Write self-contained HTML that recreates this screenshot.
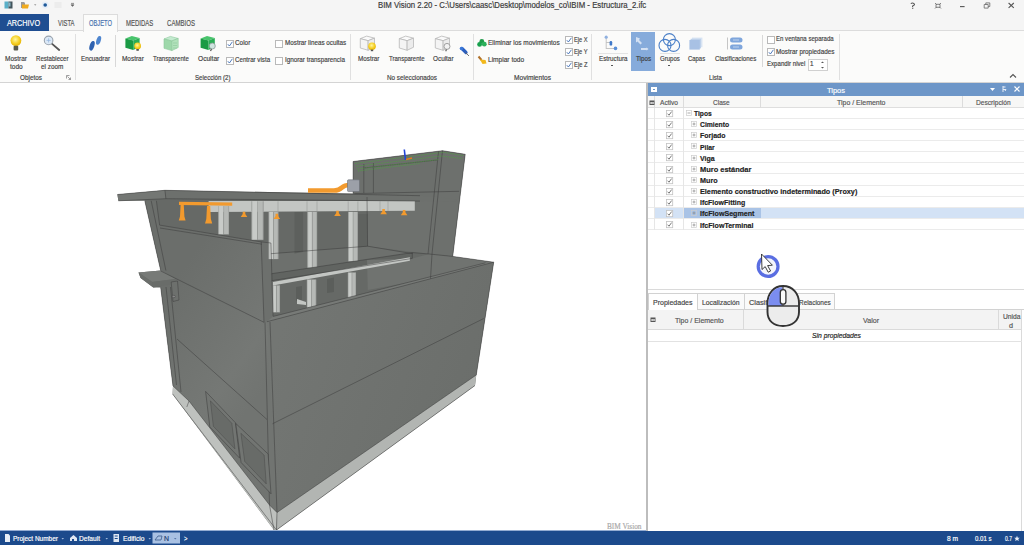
<!DOCTYPE html>
<html><head><meta charset="utf-8">
<style>
*{margin:0;padding:0;box-sizing:border-box}
html,body{width:1024px;height:545px;overflow:hidden;background:#fff;font-family:"Liberation Sans",sans-serif;color:#444;position:relative}
.a{position:absolute;white-space:nowrap;transform-origin:0 0;-webkit-text-stroke:0.18px currentColor}
svg{position:absolute;left:0;top:0}
</style></head><body>
<div class="a" style="left:0px;top:0px;width:1024px;height:31px;background:#f5f5f5;"></div>
<div class="a" style="left:0px;top:30px;width:1024px;height:53px;background:#fbfbfa;border-top:1px solid #dcdcdc;border-bottom:1px solid #d4d4d4"></div>
<div class="a" style="left:0px;top:83px;width:648px;height:448px;background:#ffffff;"></div>
<div class="a" style="left:0px;top:531px;width:1024px;height:14px;background:#1c4a8c;"></div>
<div class="a" style="left:378.00px;top:1.00px;font-size:8.4px;line-height:9.38px;color:#3a3a3a;transform:scaleX(0.930);">BIM Vision 2.20 - C:\Users\caasc\Desktop\modelos_co\IBIM - Estructura_2.ifc</div>
<svg width="80" height="14" style="left:0;top:0"><rect x="4.5" y="1.5" width="4" height="7" fill="#5ab0c8"/><rect x="8.5" y="1.5" width="4" height="7" fill="#44555c"/><rect x="8.5" y="2.5" width="2" height="4" fill="#8ab8c8"/><path d="M21 2h3l1 1v5h-4z" fill="#9a9a9a"/><path d="M22 4.5h7l-1 4h-6z" fill="#f0aa1e"/><path d="M34 4.6h2.4l-1.2 1z" fill="#666"/><circle cx="45.2" cy="5" r="3.4" fill="#e6eef8"/><circle cx="45.2" cy="5" r="1.8" fill="#1f5a9a"/><rect x="54.5" y="2" width="7" height="6" fill="#ececec"/><path d="M71 3.4h3M71.1 4.8l1.4 1.6 1.4-1.6z" stroke="#666" stroke-width="0.7" fill="#666"/></svg>
<svg width="120" height="14" style="left:900px;top:0"><path d="M10.8 3.6q1.7-1.2 3.2 0t-1.4 2.4v1" stroke="#555" stroke-width="1.1" fill="none"/><rect x="12.1" y="7.7" width="1.2" height="1.1" fill="#555"/><path d="M35 3l1.6 1.6M41 3l-1.6 1.6M35 8.5l1.6-1.6M41 8.5l-1.6-1.6M36 4.3h4v3h-4z" stroke="#666" stroke-width="0.8" fill="none"/><path d="M60 6.6h4.6" stroke="#555" stroke-width="1.1"/><path d="M84.2 4.5h4v3.6h-4zM85.8 4.5v-1.6h4v3.6h-1.6" stroke="#666" stroke-width="0.8" fill="none"/><path d="M108.6 3l5.2 4.8M113.8 3l-5.2 4.8" stroke="#555" stroke-width="1.1"/></svg>
<div class="a" style="left:0px;top:14px;width:49px;height:17px;background:#1f4e91;"></div>
<div class="a" style="left:7.30px;top:19.01px;font-size:8.5px;line-height:9.49px;color:#ffffff;transform:scaleX(0.855);">ARCHIVO</div>
<div class="a" style="left:58.00px;top:19.28px;font-size:8.2px;line-height:9.16px;color:#555;transform:scaleX(0.715);">VISTA</div>
<div class="a" style="left:83px;top:14px;width:35px;height:18px;background:#fbfbfa;border:1px solid #dcdcdc;border-bottom:none"></div>
<div class="a" style="left:89.00px;top:19.28px;font-size:8.2px;line-height:9.16px;color:#4a74b0;transform:scaleX(0.704);">OBJETO</div>
<div class="a" style="left:125.75px;top:19.28px;font-size:8.2px;line-height:9.16px;color:#555;transform:scaleX(0.729);">MEDIDAS</div>
<div class="a" style="left:167.00px;top:19.28px;font-size:8.2px;line-height:9.16px;color:#555;transform:scaleX(0.740);">CAMBIOS</div>
<div class="a" style="left:75px;top:34px;width:1px;height:46px;background:#e0e0e0;"></div>
<div class="a" style="left:350px;top:34px;width:1px;height:46px;background:#e0e0e0;"></div>
<div class="a" style="left:473px;top:34px;width:1px;height:46px;background:#e0e0e0;"></div>
<div class="a" style="left:591px;top:34px;width:1px;height:46px;background:#e0e0e0;"></div>
<div class="a" style="left:839px;top:34px;width:1px;height:46px;background:#e0e0e0;"></div>
<div class="a" style="left:115px;top:35px;width:1px;height:32px;background:#d8d8d8;"></div>
<div class="a" style="left:762px;top:35px;width:1px;height:32px;background:#d8d8d8;"></div>
<div class="a" style="left:5.30px;top:54.66px;font-size:8px;line-height:8.94px;color:#3e3e3e;transform:scaleX(0.811);">Mostrar</div>
<div class="a" style="left:9.90px;top:62.66px;font-size:8px;line-height:8.94px;color:#3e3e3e;transform:scaleX(0.816);">todo</div>
<div class="a" style="left:35.50px;top:54.66px;font-size:8px;line-height:8.94px;color:#3e3e3e;transform:scaleX(0.761);">Restablecer</div>
<div class="a" style="left:40.50px;top:62.66px;font-size:8px;line-height:8.94px;color:#3e3e3e;transform:scaleX(0.796);">el zoom</div>
<div class="a" style="left:81.00px;top:54.66px;font-size:8px;line-height:8.94px;color:#3e3e3e;transform:scaleX(0.786);">Encuadrar</div>
<div class="a" style="left:122.20px;top:54.66px;font-size:8px;line-height:8.94px;color:#3e3e3e;transform:scaleX(0.804);">Mostrar</div>
<div class="a" style="left:153.40px;top:54.66px;font-size:8px;line-height:8.94px;color:#3e3e3e;transform:scaleX(0.757);">Transparente</div>
<div class="a" style="left:197.50px;top:54.66px;font-size:8px;line-height:8.94px;color:#3e3e3e;transform:scaleX(0.824);">Ocultar</div>
<div class="a" style="left:357.80px;top:54.66px;font-size:8px;line-height:8.94px;color:#3e3e3e;transform:scaleX(0.789);">Mostrar</div>
<div class="a" style="left:388.50px;top:54.66px;font-size:8px;line-height:8.94px;color:#3e3e3e;transform:scaleX(0.751);">Transparente</div>
<div class="a" style="left:433.00px;top:54.66px;font-size:8px;line-height:8.94px;color:#3e3e3e;transform:scaleX(0.795);">Ocultar</div>
<div class="a" style="left:598.50px;top:54.66px;font-size:8px;line-height:8.94px;color:#3e3e3e;transform:scaleX(0.782);">Estructura</div>
<div class="a" style="left:631px;top:32px;width:24px;height:39px;background:#86abdb;"></div>
<div class="a" style="left:635.80px;top:54.66px;font-size:8px;line-height:8.94px;color:#3a3a3a;transform:scaleX(0.779);">Tipos</div>
<div class="a" style="left:659.70px;top:54.66px;font-size:8px;line-height:8.94px;color:#3e3e3e;transform:scaleX(0.755);">Grupos</div>
<div class="a" style="left:688.40px;top:54.66px;font-size:8px;line-height:8.94px;color:#3e3e3e;transform:scaleX(0.739);">Capas</div>
<div class="a" style="left:714.50px;top:54.66px;font-size:8px;line-height:8.94px;color:#3e3e3e;transform:scaleX(0.773);">Clasificaciones</div>
<div class="a" style="left:611px;top:65px;width:2px;height:1px;background:#555;"></div>
<div class="a" style="left:668px;top:65px;width:2px;height:1px;background:#555;"></div>
<div class="a" style="left:598px;top:53px;width:30px;height:1px;background:#e4e4e4;"></div>
<div class="a" style="left:659.5px;top:53px;width:20.5px;height:1px;background:#e4e4e4;"></div>
<svg width="9" height="9" style="left:225.5px;top:39.5px"><rect x="0.5" y="0.5" width="7" height="7" fill="#fff" stroke="#b9b9b9"/><path d="M1.8 4.2l1.6 1.8 3-4.2" stroke="#3c6cb4" stroke-width="0.9" fill="none"/></svg>
<div class="a" style="left:235.30px;top:39.26px;font-size:8px;line-height:8.94px;color:#3e3e3e;transform:scaleX(0.800);">Color</div>
<svg width="9" height="9" style="left:225.5px;top:56.5px"><rect x="0.5" y="0.5" width="7" height="7" fill="#fff" stroke="#b9b9b9"/><path d="M1.8 4.2l1.6 1.8 3-4.2" stroke="#3c6cb4" stroke-width="0.9" fill="none"/></svg>
<div class="a" style="left:235.30px;top:56.36px;font-size:8px;line-height:8.94px;color:#3e3e3e;transform:scaleX(0.774);">Centrar vista</div>
<svg width="9" height="9" style="left:275px;top:39.5px"><rect x="0.5" y="0.5" width="7" height="7" fill="#fff" stroke="#b9b9b9"/></svg>
<div class="a" style="left:284.80px;top:39.26px;font-size:8px;line-height:8.94px;color:#3e3e3e;transform:scaleX(0.787);">Mostrar lineas ocultas</div>
<svg width="9" height="9" style="left:275px;top:56.5px"><rect x="0.5" y="0.5" width="7" height="7" fill="#fff" stroke="#b9b9b9"/></svg>
<div class="a" style="left:284.80px;top:56.36px;font-size:8px;line-height:8.94px;color:#3e3e3e;transform:scaleX(0.788);">Ignorar transparencia</div>
<div class="a" style="left:487.80px;top:39.26px;font-size:8px;line-height:8.94px;color:#3e3e3e;transform:scaleX(0.810);">Eliminar los movimientos</div>
<div class="a" style="left:487.80px;top:56.36px;font-size:8px;line-height:8.94px;color:#3e3e3e;transform:scaleX(0.822);">Limpiar todo</div>
<svg width="9" height="9" style="left:564.5px;top:35.5px"><rect x="0.5" y="0.5" width="7" height="7" fill="#fff" stroke="#b9b9b9"/><path d="M1.8 4.2l1.6 1.8 3-4.2" stroke="#3c6cb4" stroke-width="0.9" fill="none"/></svg>
<div class="a" style="left:574.00px;top:35.86px;font-size:8px;line-height:8.94px;color:#3e3e3e;transform:scaleX(0.711);">Eje X</div>
<svg width="9" height="9" style="left:564.5px;top:48px"><rect x="0.5" y="0.5" width="7" height="7" fill="#fff" stroke="#b9b9b9"/><path d="M1.8 4.2l1.6 1.8 3-4.2" stroke="#3c6cb4" stroke-width="0.9" fill="none"/></svg>
<div class="a" style="left:574.00px;top:48.46px;font-size:8px;line-height:8.94px;color:#3e3e3e;transform:scaleX(0.717);">Eje Y</div>
<svg width="9" height="9" style="left:564.5px;top:60.7px"><rect x="0.5" y="0.5" width="7" height="7" fill="#fff" stroke="#b9b9b9"/><path d="M1.8 4.2l1.6 1.8 3-4.2" stroke="#3c6cb4" stroke-width="0.9" fill="none"/></svg>
<div class="a" style="left:574.00px;top:61.16px;font-size:8px;line-height:8.94px;color:#3e3e3e;transform:scaleX(0.728);">Eje Z</div>
<svg width="9" height="9" style="left:767px;top:35.5px"><rect x="0.5" y="0.5" width="7" height="7" fill="#fff" stroke="#b9b9b9"/></svg>
<div class="a" style="left:776.30px;top:35.36px;font-size:8px;line-height:8.94px;color:#3e3e3e;transform:scaleX(0.759);">En ventana separada</div>
<svg width="9" height="9" style="left:767px;top:47.5px"><rect x="0.5" y="0.5" width="7" height="7" fill="#fff" stroke="#b9b9b9"/><path d="M1.8 4.2l1.6 1.8 3-4.2" stroke="#3c6cb4" stroke-width="0.9" fill="none"/></svg>
<div class="a" style="left:776.30px;top:47.96px;font-size:8px;line-height:8.94px;color:#3e3e3e;transform:scaleX(0.797);">Mostrar propiedades</div>
<div class="a" style="left:766.50px;top:60.46px;font-size:8px;line-height:8.94px;color:#3e3e3e;transform:scaleX(0.762);">Expandir nivel</div>
<div class="a" style="left:807.5px;top:58.5px;width:20px;height:12px;background:#fff;border:1px solid #d0d0d0"></div>
<div class="a" style="left:810.00px;top:60.46px;font-size:8px;line-height:8.94px;color:#3e3e3e;transform:scaleX(0.787);">1</div>
<svg width="6" height="10" style="left:820px;top:59.5px"><path d="M1 3l1.5-1.5 1.5 1.5zM1 7l1.5 1.5 1.5-1.5z" fill="#555"/></svg>
<div class="a" style="left:20.00px;top:74.16px;font-size:8px;line-height:8.94px;color:#3e3e3e;transform:scaleX(0.798);">Objetos</div>
<div class="a" style="left:194.50px;top:74.16px;font-size:8px;line-height:8.94px;color:#3e3e3e;transform:scaleX(0.760);">Selección (2)</div>
<div class="a" style="left:386.50px;top:74.16px;font-size:8px;line-height:8.94px;color:#3e3e3e;transform:scaleX(0.792);">No seleccionados</div>
<div class="a" style="left:513.75px;top:74.16px;font-size:8px;line-height:8.94px;color:#3e3e3e;transform:scaleX(0.823);">Movimientos</div>
<div class="a" style="left:709.00px;top:74.16px;font-size:8px;line-height:8.94px;color:#3e3e3e;transform:scaleX(0.769);">Lista</div>
<svg width="6" height="6" style="left:65.5px;top:74.5px"><path d="M0.5 0.5h3M0.5 0.5v3M1.5 1.5l3 3M4.5 2.5v2h-2" stroke="#777" stroke-width="0.7" fill="none"/></svg>
<svg width="8" height="6" style="left:1009px;top:73px"><path d="M1 4.5l3-3 3 3" stroke="#555" stroke-width="1.1" fill="none"/></svg>
<svg width="1024" height="83" style="left:0;top:0"><defs><radialGradient id="bulb" cx="0.45" cy="0.4" r="0.6"><stop offset="0" stop-color="#fff6a0"/><stop offset="0.6" stop-color="#f7d22a"/><stop offset="1" stop-color="#e6b400"/></radialGradient><linearGradient id="gcube" x1="0" y1="0" x2="1" y2="1"><stop offset="0" stop-color="#34b85a"/><stop offset="1" stop-color="#12873a"/></linearGradient></defs><circle cx="15.9" cy="40.6" r="5.4" fill="url(#bulb)"/><rect x="13.6" y="45.8" width="4.6" height="4.6" rx="1" fill="#5a5a4a"/><path d="M51.8 43.6L59.2 50" stroke="#555" stroke-width="1.8" stroke-linecap="round"/><circle cx="48.6" cy="40.4" r="4.3" fill="#dce9f7" stroke="#9aa3ad" stroke-width="1.1"/><path d="M46.5 40.4h4.2M48.6 38.3v4.2" stroke="#8fb2dc" stroke-width="0.7"/><ellipse cx="92" cy="45.8" rx="2.3" ry="5" transform="rotate(18 92 45.8)" fill="#2f62b0"/><ellipse cx="98.6" cy="40.4" rx="2.2" ry="4.6" transform="rotate(18 98.6 40.4)" fill="#4f86cf"/><polygon points="125.4,38.455999999999996 131.79,35.9 139.6,37.9448 133.21,40.5008" fill="#48c46c"/><polygon points="125.4,38.455999999999996 133.21,40.5008 133.21,50.099999999999994 125.4,47.7996" fill="#1a9a44"/><polygon points="133.21,40.5008 139.6,37.9448 139.6,47.032799999999995 133.21,50.099999999999994" fill="#2aae55"/><circle cx="137.6" cy="46" r="3.4" fill="url(#bulb)"/><rect x="136.4" y="49" width="2.4" height="1.8" fill="#555"/><polygon points="164,38.955999999999996 170.39,36.4 178.2,38.4448 171.81,41.0008" fill="#c4ead0" stroke="#8cc89a" stroke-width="0.6" stroke-linejoin="round"/><polygon points="164,38.955999999999996 171.81,41.0008 171.81,50.599999999999994 164,48.2996" fill="#9ed8aa" stroke="#8cc89a" stroke-width="0.6" stroke-linejoin="round"/><polygon points="171.81,41.0008 178.2,38.4448 178.2,47.532799999999995 171.81,50.599999999999994" fill="#b2e2bb" stroke="#8cc89a" stroke-width="0.6" stroke-linejoin="round"/><path d="M173 43h4M173 45.5h4M173 48h4" stroke="#8cc89a" stroke-width="0.6"/><polygon points="200.6,38.455999999999996 206.98999999999998,35.9 214.79999999999998,37.9448 208.41,40.5008" fill="#48c46c"/><polygon points="200.6,38.455999999999996 208.41,40.5008 208.41,50.099999999999994 200.6,47.7996" fill="#1a9a44"/><polygon points="208.41,40.5008 214.79999999999998,37.9448 214.79999999999998,47.032799999999995 208.41,50.099999999999994" fill="#2aae55"/><circle cx="212.3" cy="46" r="3" fill="#cfe5e0" stroke="#8a9a98" stroke-width="0.8"/><path d="M211.5 49l-1 2" stroke="#555" stroke-width="1.2"/><polygon points="360.3,38.656 366.69,36.1 374.5,38.144800000000004 368.11,40.7008" fill="#fafafa" stroke="#b8b8b8" stroke-width="0.8" stroke-linejoin="round"/><polygon points="360.3,38.656 368.11,40.7008 368.11,50.3 360.3,47.9996" fill="#f4f4f4" stroke="#b8b8b8" stroke-width="0.8" stroke-linejoin="round"/><polygon points="368.11,40.7008 374.5,38.144800000000004 374.5,47.2328 368.11,50.3" fill="#ececec" stroke="#b8b8b8" stroke-width="0.8" stroke-linejoin="round"/><circle cx="372" cy="46.2" r="3.8" fill="url(#bulb)"/><rect x="370.8" y="49.6" width="2.4" height="1.6" fill="#555"/><polygon points="399.3,38.656 405.69,36.1 413.5,38.144800000000004 407.11,40.7008" fill="#fafafa" stroke="#b8b8b8" stroke-width="0.8" stroke-linejoin="round"/><polygon points="399.3,38.656 407.11,40.7008 407.11,50.3 399.3,47.9996" fill="#f4f4f4" stroke="#b8b8b8" stroke-width="0.8" stroke-linejoin="round"/><polygon points="407.11,40.7008 413.5,38.144800000000004 413.5,47.2328 407.11,50.3" fill="#ececec" stroke="#b8b8b8" stroke-width="0.8" stroke-linejoin="round"/><polygon points="435.3,38.656 441.69,36.1 449.5,38.144800000000004 443.11,40.7008" fill="#fafafa" stroke="#b8b8b8" stroke-width="0.8" stroke-linejoin="round"/><polygon points="435.3,38.656 443.11,40.7008 443.11,50.3 435.3,47.9996" fill="#f4f4f4" stroke="#b8b8b8" stroke-width="0.8" stroke-linejoin="round"/><polygon points="443.11,40.7008 449.5,38.144800000000004 449.5,47.2328 443.11,50.3" fill="#ececec" stroke="#b8b8b8" stroke-width="0.8" stroke-linejoin="round"/><circle cx="447" cy="46.4" r="3" fill="#f2f2f2" stroke="#999" stroke-width="0.9"/><path d="M446.5 49.5l-0.8 1.8" stroke="#555" stroke-width="1.1"/><path d="M462 48.5l4 4" stroke="#2a5fc0" stroke-width="3.2" stroke-linecap="round"/><path d="M465.5 52.5l3.5 3.5" stroke="#666" stroke-width="0.9"/><circle cx="461.5" cy="48.5" r="1.8" fill="#3a78d8"/><circle cx="481.8" cy="41.4" r="2.4" fill="#1f9a4a"/><circle cx="479.6" cy="44.4" r="2.4" fill="#17a04c"/><circle cx="484.3" cy="44.2" r="2.4" fill="#2bb05a"/><path d="M478.5 56.5l3 3.5" stroke="#b0702a" stroke-width="2"/><path d="M480 59.5l5.5 0.5 1 3.5-4 .5z" fill="#f2b81a"/><path d="M606.2 37v12M606.2 42.5h4.6M606.2 48.5h9" stroke="#b8b8b8" stroke-width="0.8" fill="none"/><circle cx="606.2" cy="37.2" r="1.6" fill="#8fb0e0"/><rect x="609.6" y="41" width="2.6" height="4.6" rx="1.2" fill="#3f78c8"/><circle cx="615.5" cy="48.4" r="1.8" fill="#5a8fd8"/><path d="M636 37l4 1.5-1 1.5 3 3-1.5 1.5-3-3-1.5 1z" fill="#d4e1f3"/><path d="M641 48h6l-1.5-1.5 3 2.5-3 2.5 1.5-1.5h-6z" fill="#d4e1f3"/><circle cx="669.4" cy="39.6" r="6" fill="none" stroke="#4c80c8" stroke-width="1.1"/><circle cx="665" cy="45.4" r="6" fill="none" stroke="#4c80c8" stroke-width="1.1"/><circle cx="673.6" cy="45.4" r="6" fill="none" stroke="#4c80c8" stroke-width="1.1"/><rect x="692" y="37.6" width="10.4" height="9.6" fill="#d8e4f3"/><rect x="690.6" y="38.8" width="10.4" height="9.6" fill="#bed1ea"/><rect x="689.4" y="40" width="10.4" height="9.6" fill="#a8c1e4"/><path d="M727.5 37.5v12" stroke="#b8b8b8" stroke-width="0.8"/><rect x="730" y="37.5" width="12.5" height="5" rx="2.5" fill="#7fa6dc"/><rect x="730" y="44.5" width="12.5" height="5" rx="2.5" fill="#7fa6dc"/><path d="M733 40h6M733 47h6" stroke="#cfdff3" stroke-width="0.8"/></svg>
<div class="a" style="left:646px;top:83px;width:2px;height:448px;background:#bdbdbd;"></div>
<div class="a" style="left:648px;top:83px;width:376px;height:448px;background:#ffffff;"></div>
<div class="a" style="left:648px;top:83px;width:376px;height:13px;background:#6d96c8;"></div>
<div class="a" style="left:651px;top:86.5px;width:6px;height:5.5px;background:#ffffff;"></div>
<div class="a" style="left:653px;top:88.5px;width:2px;height:1.5px;background:#6d96c8;"></div>
<div class="a" style="left:827.00px;top:87.36px;font-size:8px;line-height:8.94px;color:#ffffff;transform:scaleX(0.934);">Tipos</div>
<svg width="34" height="13" style="left:988px;top:83px"><path d="M2 5h5l-2.5 3z" fill="#fff"/><path d="M15 3v6M15 4h2.5M15 6.5h3l-1 1.5" stroke="#e8eef8" stroke-width="1" fill="none"/><path d="M26.5 3.5l5 5M31.5 3.5l-5 5" stroke="#fff" stroke-width="1.2"/></svg>
<div class="a" style="left:648px;top:96px;width:376px;height:11.5px;background:#f7f7f6;border-bottom:1px solid #dedede"></div>
<div class="a" style="left:654px;top:96px;width:1px;height:11.5px;background:#dcdcdc;"></div>
<div class="a" style="left:683px;top:96px;width:1px;height:11.5px;background:#dcdcdc;"></div>
<div class="a" style="left:760px;top:96px;width:1px;height:11.5px;background:#dcdcdc;"></div>
<div class="a" style="left:962px;top:96px;width:1px;height:11.5px;background:#dcdcdc;"></div>
<svg width="7" height="6" style="left:649px;top:99.5px"><rect x="0.5" y="0.5" width="5" height="4.5" fill="#555"/><rect x="1.5" y="2" width="1.2" height="2" fill="#fff"/><rect x="3.4" y="2" width="1.2" height="2" fill="#fff"/></svg>
<div class="a" style="left:660.00px;top:98.76px;font-size:8px;line-height:8.94px;color:#555;transform:scaleX(0.826);">Activo</div>
<div class="a" style="left:713.40px;top:98.76px;font-size:8px;line-height:8.94px;color:#555;transform:scaleX(0.812);">Clase</div>
<div class="a" style="left:837.30px;top:98.76px;font-size:8px;line-height:8.94px;color:#555;transform:scaleX(0.870);">Tipo / Elemento</div>
<div class="a" style="left:975.90px;top:98.76px;font-size:8px;line-height:8.94px;color:#555;transform:scaleX(0.828);">Descripción</div>
<div class="a" style="left:654px;top:207.94px;width:370px;height:11.16px;background:#d3e2f5;"></div>
<div class="a" style="left:684px;top:207.94px;width:76.5px;height:11.16px;background:#a9c3e6;"></div>
<div class="a" style="left:648px;top:117.66px;width:376px;height:1px;background:#ebebeb;"></div>
<svg width="8" height="8" style="left:665.5px;top:109.70px"><rect x="0.5" y="0.5" width="6.2" height="6.2" fill="#fff" stroke="#c2c2c2" stroke-width="0.8"/><path d="M1.6 3.7l1.4 1.5 2.6-3.6" stroke="#555" stroke-width="0.8" fill="none"/></svg>
<svg width="7" height="7" style="left:685.5px;top:110.00px"><rect x="0.5" y="0.5" width="5" height="5" fill="none" stroke="#ccc" stroke-width="0.7"/><path d="M1.5 3h3" stroke="#888" stroke-width="0.7"/></svg>
<div class="a" style="left:694.30px;top:110.04px;font-size:7.8px;line-height:8.71px;color:#222;font-weight:bold;transform:scaleX(0.857);">Tipos</div>
<div class="a" style="left:648px;top:128.82px;width:376px;height:1px;background:#ebebeb;"></div>
<svg width="8" height="8" style="left:665.5px;top:120.86px"><rect x="0.5" y="0.5" width="6.2" height="6.2" fill="#fff" stroke="#c2c2c2" stroke-width="0.8"/><path d="M1.6 3.7l1.4 1.5 2.6-3.6" stroke="#555" stroke-width="0.8" fill="none"/></svg>
<svg width="7" height="7" style="left:690.5px;top:121.16px"><rect x="0.5" y="0.5" width="5" height="5" fill="none" stroke="#ccc" stroke-width="0.7"/><path d="M1.5 3h3M3 1.5v3" stroke="#888" stroke-width="0.7"/></svg>
<div class="a" style="left:699.60px;top:121.20px;font-size:7.8px;line-height:8.71px;color:#222;font-weight:bold;transform:scaleX(0.872);">Cimiento</div>
<div class="a" style="left:648px;top:139.98px;width:376px;height:1px;background:#ebebeb;"></div>
<svg width="8" height="8" style="left:665.5px;top:132.02px"><rect x="0.5" y="0.5" width="6.2" height="6.2" fill="#fff" stroke="#c2c2c2" stroke-width="0.8"/><path d="M1.6 3.7l1.4 1.5 2.6-3.6" stroke="#555" stroke-width="0.8" fill="none"/></svg>
<svg width="7" height="7" style="left:690.5px;top:132.32px"><rect x="0.5" y="0.5" width="5" height="5" fill="none" stroke="#ccc" stroke-width="0.7"/><path d="M1.5 3h3M3 1.5v3" stroke="#888" stroke-width="0.7"/></svg>
<div class="a" style="left:699.60px;top:132.36px;font-size:7.8px;line-height:8.71px;color:#222;font-weight:bold;transform:scaleX(0.895);">Forjado</div>
<div class="a" style="left:648px;top:151.14000000000001px;width:376px;height:1px;background:#ebebeb;"></div>
<svg width="8" height="8" style="left:665.5px;top:143.18px"><rect x="0.5" y="0.5" width="6.2" height="6.2" fill="#fff" stroke="#c2c2c2" stroke-width="0.8"/><path d="M1.6 3.7l1.4 1.5 2.6-3.6" stroke="#555" stroke-width="0.8" fill="none"/></svg>
<svg width="7" height="7" style="left:690.5px;top:143.48px"><rect x="0.5" y="0.5" width="5" height="5" fill="none" stroke="#ccc" stroke-width="0.7"/><path d="M1.5 3h3M3 1.5v3" stroke="#888" stroke-width="0.7"/></svg>
<div class="a" style="left:699.60px;top:143.52px;font-size:7.8px;line-height:8.71px;color:#222;font-weight:bold;transform:scaleX(0.869);">Pilar</div>
<div class="a" style="left:648px;top:162.29999999999998px;width:376px;height:1px;background:#ebebeb;"></div>
<svg width="8" height="8" style="left:665.5px;top:154.34px"><rect x="0.5" y="0.5" width="6.2" height="6.2" fill="#fff" stroke="#c2c2c2" stroke-width="0.8"/><path d="M1.6 3.7l1.4 1.5 2.6-3.6" stroke="#555" stroke-width="0.8" fill="none"/></svg>
<svg width="7" height="7" style="left:690.5px;top:154.64px"><rect x="0.5" y="0.5" width="5" height="5" fill="none" stroke="#ccc" stroke-width="0.7"/><path d="M1.5 3h3M3 1.5v3" stroke="#888" stroke-width="0.7"/></svg>
<div class="a" style="left:699.60px;top:154.68px;font-size:7.8px;line-height:8.71px;color:#222;font-weight:bold;transform:scaleX(0.900);">Viga</div>
<div class="a" style="left:648px;top:173.46px;width:376px;height:1px;background:#ebebeb;"></div>
<svg width="8" height="8" style="left:665.5px;top:165.50px"><rect x="0.5" y="0.5" width="6.2" height="6.2" fill="#fff" stroke="#c2c2c2" stroke-width="0.8"/><path d="M1.6 3.7l1.4 1.5 2.6-3.6" stroke="#555" stroke-width="0.8" fill="none"/></svg>
<svg width="7" height="7" style="left:690.5px;top:165.80px"><rect x="0.5" y="0.5" width="5" height="5" fill="none" stroke="#ccc" stroke-width="0.7"/><path d="M1.5 3h3M3 1.5v3" stroke="#888" stroke-width="0.7"/></svg>
<div class="a" style="left:699.60px;top:165.84px;font-size:7.8px;line-height:8.71px;color:#222;font-weight:bold;transform:scaleX(0.956);">Muro estándar</div>
<div class="a" style="left:648px;top:184.62px;width:376px;height:1px;background:#ebebeb;"></div>
<svg width="8" height="8" style="left:665.5px;top:176.66px"><rect x="0.5" y="0.5" width="6.2" height="6.2" fill="#fff" stroke="#c2c2c2" stroke-width="0.8"/><path d="M1.6 3.7l1.4 1.5 2.6-3.6" stroke="#555" stroke-width="0.8" fill="none"/></svg>
<svg width="7" height="7" style="left:690.5px;top:176.96px"><rect x="0.5" y="0.5" width="5" height="5" fill="none" stroke="#ccc" stroke-width="0.7"/><path d="M1.5 3h3M3 1.5v3" stroke="#888" stroke-width="0.7"/></svg>
<div class="a" style="left:699.60px;top:177.00px;font-size:7.8px;line-height:8.71px;color:#222;font-weight:bold;transform:scaleX(0.923);">Muro</div>
<div class="a" style="left:648px;top:195.78px;width:376px;height:1px;background:#ebebeb;"></div>
<svg width="8" height="8" style="left:665.5px;top:187.82px"><rect x="0.5" y="0.5" width="6.2" height="6.2" fill="#fff" stroke="#c2c2c2" stroke-width="0.8"/><path d="M1.6 3.7l1.4 1.5 2.6-3.6" stroke="#555" stroke-width="0.8" fill="none"/></svg>
<svg width="7" height="7" style="left:690.5px;top:188.12px"><rect x="0.5" y="0.5" width="5" height="5" fill="none" stroke="#ccc" stroke-width="0.7"/><path d="M1.5 3h3M3 1.5v3" stroke="#888" stroke-width="0.7"/></svg>
<div class="a" style="left:699.60px;top:188.16px;font-size:7.8px;line-height:8.71px;color:#222;font-weight:bold;transform:scaleX(0.931);">Elemento constructivo indeterminado (Proxy)</div>
<div class="a" style="left:648px;top:206.94px;width:376px;height:1px;background:#ebebeb;"></div>
<svg width="8" height="8" style="left:665.5px;top:198.98px"><rect x="0.5" y="0.5" width="6.2" height="6.2" fill="#fff" stroke="#c2c2c2" stroke-width="0.8"/><path d="M1.6 3.7l1.4 1.5 2.6-3.6" stroke="#555" stroke-width="0.8" fill="none"/></svg>
<svg width="7" height="7" style="left:690.5px;top:199.28px"><rect x="0.5" y="0.5" width="5" height="5" fill="none" stroke="#ccc" stroke-width="0.7"/><path d="M1.5 3h3M3 1.5v3" stroke="#888" stroke-width="0.7"/></svg>
<div class="a" style="left:699.60px;top:199.32px;font-size:7.8px;line-height:8.71px;color:#222;font-weight:bold;transform:scaleX(0.892);">IfcFlowFitting</div>
<div class="a" style="left:648px;top:218.1px;width:376px;height:1px;background:#ebebeb;"></div>
<svg width="8" height="8" style="left:665.5px;top:210.14px"><rect x="0.5" y="0.5" width="6.2" height="6.2" fill="#fff" stroke="#c2c2c2" stroke-width="0.8"/><path d="M1.6 3.7l1.4 1.5 2.6-3.6" stroke="#555" stroke-width="0.8" fill="none"/></svg>
<svg width="7" height="7" style="left:690.5px;top:210.44px"><rect x="0.5" y="0.5" width="5" height="5" fill="none" stroke="#ccc" stroke-width="0.7"/><path d="M1.5 3h3M3 1.5v3" stroke="#888" stroke-width="0.7"/></svg>
<div class="a" style="left:699.60px;top:210.48px;font-size:7.8px;line-height:8.71px;color:#222;font-weight:bold;transform:scaleX(0.910);">IfcFlowSegment</div>
<div class="a" style="left:648px;top:229.26px;width:376px;height:1px;background:#ebebeb;"></div>
<svg width="8" height="8" style="left:665.5px;top:221.30px"><rect x="0.5" y="0.5" width="6.2" height="6.2" fill="#fff" stroke="#c2c2c2" stroke-width="0.8"/><path d="M1.6 3.7l1.4 1.5 2.6-3.6" stroke="#555" stroke-width="0.8" fill="none"/></svg>
<svg width="7" height="7" style="left:690.5px;top:221.60px"><rect x="0.5" y="0.5" width="5" height="5" fill="none" stroke="#ccc" stroke-width="0.7"/><path d="M1.5 3h3M3 1.5v3" stroke="#888" stroke-width="0.7"/></svg>
<div class="a" style="left:699.60px;top:221.64px;font-size:7.8px;line-height:8.71px;color:#222;font-weight:bold;transform:scaleX(0.908);">IfcFlowTerminal</div>
<div class="a" style="left:654px;top:107.5px;width:1px;height:122.76px;background:#e6e6e6;"></div>
<div class="a" style="left:683px;top:107.5px;width:1px;height:122.76px;background:#e6e6e6;"></div>
<div class="a" style="left:648px;top:289px;width:376px;height:1px;background:#dadada;"></div>
<div class="a" style="left:648px;top:293px;width:376px;height:17px;background:#ffffff;border-bottom:1px solid #d2d2d2"></div>
<div class="a" style="left:648px;top:293px;width:49.700000000000045px;height:17px;background:#ffffff;border:1px solid #d2d2d2;border-bottom:none"></div>
<div class="a" style="left:652.50px;top:298.76px;font-size:8px;line-height:8.94px;color:#444;transform:scaleX(0.879);">Propiedades</div>
<div class="a" style="left:696.7px;top:293px;width:48.59999999999991px;height:17px;background:#fafafa;border:1px solid #d2d2d2;"></div>
<div class="a" style="left:701.70px;top:298.76px;font-size:8px;line-height:8.94px;color:#444;transform:scaleX(0.854);">Localización</div>
<div class="a" style="left:744.3px;top:293px;width:52.700000000000045px;height:17px;background:#fafafa;border:1px solid #d2d2d2;"></div>
<div class="a" style="left:749.00px;top:298.76px;font-size:8px;line-height:8.94px;color:#444;transform:scaleX(0.913);">Clasificación</div>
<div class="a" style="left:796px;top:293px;width:39.39999999999998px;height:17px;background:#fafafa;border:1px solid #d2d2d2;"></div>
<div class="a" style="left:798.60px;top:298.76px;font-size:8px;line-height:8.94px;color:#444;transform:scaleX(0.801);">Relaciones</div>
<div class="a" style="left:648px;top:310px;width:374px;height:20px;background:#f3f3f3;border-bottom:1px solid #dadada"></div>
<div class="a" style="left:743px;top:310px;width:1px;height:20px;background:#dadada;"></div>
<div class="a" style="left:998px;top:310px;width:1px;height:20px;background:#dadada;"></div>
<div class="a" style="left:1021px;top:310px;width:1px;height:221px;background:#dadada;"></div>
<svg width="7" height="6" style="left:649.5px;top:316.5px"><rect x="0.5" y="0.5" width="5" height="4.5" fill="#555"/><rect x="1.5" y="2" width="1.2" height="2" fill="#fff"/><rect x="3.4" y="2" width="1.2" height="2" fill="#fff"/></svg>
<div class="a" style="left:675.00px;top:316.66px;font-size:8px;line-height:8.94px;color:#555;transform:scaleX(0.874);">Tipo / Elemento</div>
<div class="a" style="left:863.00px;top:316.66px;font-size:8px;line-height:8.94px;color:#555;transform:scaleX(0.885);">Valor</div>
<div class="a" style="left:1002.50px;top:313.26px;font-size:7px;line-height:7.82px;color:#555;transform:scaleX(0.957);">Unida</div>
<div class="a" style="left:1009.00px;top:321.87px;font-size:7px;line-height:7.82px;color:#555;transform:scaleX(1.027);">d</div>
<div class="a" style="left:648px;top:341px;width:374px;height:1px;background:#e2e2e2;"></div>
<div class="a" style="left:811.80px;top:332.36px;font-size:8px;line-height:8.94px;color:#222;font-style:italic;transform:scaleX(0.847);">Sin propiedades</div>
<svg width="1024" height="545" style="left:0;top:0"><defs><linearGradient id="lfg" gradientUnits="userSpaceOnUse" x1="160" y1="300" x2="270" y2="380"><stop offset="0" stop-color="#6b6e6b"/><stop offset="0.75" stop-color="#757875"/><stop offset="1" stop-color="#717471"/></linearGradient><linearGradient id="rfg" gradientUnits="userSpaceOnUse" x1="280" y1="330" x2="480" y2="400"><stop offset="0" stop-color="#737673"/><stop offset="1" stop-color="#6b6e6b"/></linearGradient></defs><polygon points="117.40,194.50 164.90,190.30 353.10,193.60 353.10,161.50 442.50,150.70 465.20,154.30 452.70,256.40 493.70,262.20 476.25,375.00 475.00,385.50 276.50,530.00 274.00,530.00 172.60,394.00 173.00,386.00 160.70,287.40 153.30,287.40 140.60,277.90 138.50,272.60 160.70,270.50 144.80,200.80 118.40,200.80" fill="#666966" /><polygon points="353.10,161.50 442.50,150.70 438.00,197.00 353.10,197.00" fill="#6c6f6c" /><polygon points="367.00,197.00 438.00,197.00 429.20,254.00 367.60,246.20" fill="#6e716e" /><polygon points="442.50,150.70 465.20,154.30 452.70,256.40 429.20,254.00" fill="#6d706d" /><polygon points="117.40,194.50 164.90,190.30 165.90,198.70 118.40,200.80" fill="#747774" /><polygon points="164.90,190.30 420.00,195.70 438.00,197.00 456.50,199.50 456.00,202.00 420.00,201.10 165.90,198.70" fill="#6d706d" /><polygon points="144.80,200.80 156.40,200.80 159.60,225.10 261.20,241.90 273.00,242.40 273.00,322.00 277.00,512.50 269.50,505.00 189.00,401.00 173.00,386.00 160.70,287.40 160.70,270.50" fill="url(#lfg)" /><polygon points="261.20,241.90 270.90,243.00 273.00,322.00 264.00,322.30" fill="#6d706d" /><polygon points="270.90,253.70 367.60,246.20 412.70,253.70 412.70,254.80 270.90,274.20" fill="#6d706d" /><polygon points="208.60,201.10 414.80,201.10 414.80,210.80 208.60,211.90" fill="#c3c6c3" /><path d="M251.6,201.3V211" stroke="#979a97" stroke-width="0.6"/><path d="M263.4,201.3V211" stroke="#979a97" stroke-width="0.6"/><path d="M278,201.3V211" stroke="#979a97" stroke-width="0.6"/><path d="M307,201.3V211" stroke="#979a97" stroke-width="0.6"/><path d="M317,201.3V211" stroke="#979a97" stroke-width="0.6"/><path d="M348.2,201.3V211" stroke="#979a97" stroke-width="0.6"/><path d="M357.9,201.3V211" stroke="#979a97" stroke-width="0.6"/><path d="M380,201.3V211" stroke="#979a97" stroke-width="0.6"/><path d="M388,201.3V211" stroke="#979a97" stroke-width="0.6"/><polygon points="294.50,211.90 303.10,211.90 303.10,252.00 294.50,253.50" fill="#5d605d" /><polygon points="357.90,214.00 367.60,214.00 367.60,246.20 357.90,247.60" fill="#5f625f" /><rect x="218.30" y="206.00" width="5.35" height="28.40" fill="#c8cbc8"/><rect x="223.65" y="206.00" width="5.35" height="28.40" fill="#b6b9b6"/><path d="M218.60,206V234.4M223.65,206V234.4M228.70,206V234.4" stroke="#7d807d" stroke-width="0.5" stroke-opacity="0.7"/><rect x="251.60" y="201.30" width="5.90" height="38.50" fill="#c8cbc8"/><rect x="257.50" y="201.30" width="5.90" height="38.50" fill="#b6b9b6"/><path d="M251.90,201.3V239.8M257.50,201.3V239.8M263.10,201.3V239.8" stroke="#7d807d" stroke-width="0.5" stroke-opacity="0.7"/><rect x="268.70" y="211.90" width="4.85" height="47.20" fill="#c8cbc8"/><rect x="273.55" y="211.90" width="4.85" height="47.20" fill="#b6b9b6"/><path d="M269.00,211.9V259.1M273.55,211.9V259.1M278.10,211.9V259.1" stroke="#7d807d" stroke-width="0.5" stroke-opacity="0.7"/><rect x="307.40" y="211.90" width="4.85" height="55.80" fill="#c8cbc8"/><rect x="312.25" y="211.90" width="4.85" height="55.80" fill="#b6b9b6"/><path d="M307.70,211.9V267.7M312.25,211.9V267.7M316.80,211.9V267.7" stroke="#7d807d" stroke-width="0.5" stroke-opacity="0.7"/><rect x="348.20" y="211.90" width="4.85" height="49.40" fill="#c8cbc8"/><rect x="353.05" y="211.90" width="4.85" height="49.40" fill="#b6b9b6"/><path d="M348.50,211.9V261.3M353.05,211.9V261.3M357.60,211.9V261.3" stroke="#7d807d" stroke-width="0.5" stroke-opacity="0.7"/><polygon points="271.70,273.70 412.30,252.60 412.30,258.40 271.70,280.70" fill="#616461" /><polygon points="367.00,260.00 412.30,258.40 429.20,254.00 452.70,256.40 493.70,262.20 428.60,278.60 367.80,290.00" fill="#707370" /><polygon points="272.90,281.90 409.90,257.30 409.90,260.80 272.90,285.40" fill="#c3c6c3" /><polygon points="296.00,287.00 302.00,286.00 302.00,300.00 296.00,301.00" fill="#5b5e5b" /><polygon points="327.00,279.00 334.00,277.50 334.00,292.00 327.00,293.00" fill="#5b5e5b" /><rect x="272.90" y="285.40" width="3.55" height="26.90" fill="#c8cbc8"/><rect x="276.45" y="285.40" width="3.55" height="26.90" fill="#b6b9b6"/><path d="M273.20,285.4V312.3M276.45,285.4V312.3M279.70,285.4V312.3" stroke="#7d807d" stroke-width="0.5" stroke-opacity="0.7"/><rect x="306.90" y="279.50" width="4.65" height="28.10" fill="#c8cbc8"/><rect x="311.55" y="279.50" width="4.65" height="28.10" fill="#b6b9b6"/><path d="M307.20,279.5V307.6M311.55,279.5V307.6M315.90,279.5V307.6" stroke="#7d807d" stroke-width="0.5" stroke-opacity="0.7"/><rect x="347.90" y="272.50" width="4.05" height="25.80" fill="#c8cbc8"/><rect x="351.95" y="272.50" width="4.05" height="25.80" fill="#b6b9b6"/><path d="M348.20,272.5V298.3M351.95,272.5V298.3M355.70,272.5V298.3" stroke="#7d807d" stroke-width="0.5" stroke-opacity="0.7"/><polygon points="297.00,299.00 306.00,302.00 306.00,305.00 297.00,304.00" fill="#c3c6c3" /><polygon points="267.00,321.70 493.70,262.20 476.25,375.00 277.00,512.50" fill="url(#rfg)" /><polygon points="267.00,321.70 272.90,316.50 485.50,262.80 493.70,262.20" fill="#777a77" /><polygon points="173.00,386.00 189.00,401.00 269.50,505.00 277.00,512.50 276.50,530.00 274.00,530.00 172.60,394.00" fill="#bec1be" /><polygon points="277.00,512.50 476.25,375.00 475.00,385.50 276.50,530.00" fill="#b2b5b2" /><polygon points="138.50,272.60 160.70,270.50 175.40,278.90 152.20,282.10" fill="#777a77" /><polygon points="138.50,272.60 152.20,282.10 153.30,287.40 140.60,277.90" fill="#6b6e6b" /><polygon points="152.20,282.10 175.40,278.90 175.60,283.50 153.30,287.40" fill="#696c69" /><polygon points="171.20,282.00 177.50,281.00 179.00,300.00 173.00,301.50" fill="#6d706d" stroke="#3a3a3a" stroke-width="0.6" stroke-opacity="0.8"/><ellipse cx="173.8" cy="296.5" rx="1.6" ry="1.2" fill="#888" stroke="#444" stroke-width="0.5"/><path d="M117.40,194.50 L164.90,190.30 L420.00,195.70M118.40,200.80 L165.90,198.70 L420.00,201.10M164.90,190.30 L165.90,198.70M144.80,200.80 L160.70,270.50M151.20,200.80 L165.90,270.50M156.40,200.80 L159.60,225.10M159.60,225.10 L261.20,241.90 L270.90,243.00M160.00,228.00 L262.00,244.20M261.20,241.90 L264.00,322.30M270.90,243.00 L273.00,316.00M160.70,271.00 L264.00,322.30M177.00,339.00 L267.00,419.50M160.70,287.40 L173.00,386.00M166.00,287.00 L176.50,385.00M170.50,287.00 L181.00,392.00M265.00,322.30 L269.50,505.00M270.00,322.00 L277.00,512.50M267.00,321.70 L493.70,262.20 L476.25,375.00M272.90,316.50 L485.50,262.80M272.50,423.75 L483.75,318.50M173.00,386.00 L189.00,401.00 L269.50,505.00 L277.00,512.50 L476.25,375.00M172.60,394.00 L276.50,530.00 L475.00,385.50M269.50,505.00 L274.00,530.00M277.00,512.50 L276.50,530.00M189.00,401.00 L186.80,407.00M353.10,161.50 L442.50,150.70 L465.20,154.30 L452.70,256.40M353.10,161.50 L353.10,193.60M442.50,150.70 L432.00,254.00 L430.50,278.60M438.50,151.50 L428.00,254.00M354.30,193.60 L459.20,191.30M363.80,164.00 L363.80,193.00M373.40,163.00 L373.40,193.00M363.80,168.00 L437.00,160.00M367.00,197.00 L367.60,246.20M270.90,253.70 L367.60,246.20 L412.70,253.70M271.70,273.70 L412.30,252.60 L412.30,258.40M271.70,280.70 L412.30,258.40M412.30,252.60 L429.20,254.00 L452.70,256.40 L493.70,262.20" stroke="#3a3a3a" stroke-width="0.75" fill="none" stroke-opacity="0.65"/><polygon points="205.60,391.40 235.40,422.70 239.70,458.20 209.80,426.90" fill="#727572" stroke="#3a3a3a" stroke-width="0.7" stroke-opacity="0.7"/><polygon points="210.37,400.75 231.82,423.29 234.92,448.85 213.39,426.31" fill="#686b68" stroke="#3a3a3a" stroke-width="0.6" stroke-opacity="0.6"/><polygon points="235.80,423.50 268.10,454.00 271.00,493.80 241.10,462.50" fill="#727572" stroke="#3a3a3a" stroke-width="0.7" stroke-opacity="0.7"/><polygon points="240.90,433.29 264.15,455.25 266.24,483.90 244.71,461.37" fill="#686b68" stroke="#3a3a3a" stroke-width="0.6" stroke-opacity="0.6"/><path d="M179 203.4L232.2 204.2" stroke="#f29a2e" stroke-width="3.2" fill="none"/><path d="M180.6 205L180 216.5 178.8 220.5h6.8L184.4 216.5 183.8 205zM207 206L206.3 219 205 223.5h7.2L210.9 219 210.2 206z" fill="#f29a2e"/><path d="M242.70,211.70h2.6v2.2l2 3h-6.6l2-3z" fill="#f29a2e"/><path d="M275.50,213.70h2.6v2.2l2 3h-6.6l2-3z" fill="#f29a2e"/><path d="M336.20,210.70h2.6v2.2l2 3h-6.6l2-3z" fill="#f29a2e"/><path d="M382.30,209.00h2.6v2.2l2 3h-6.6l2-3z" fill="#f29a2e"/><path d="M402.80,210.00h2.6v2.2l2 3h-6.6l2-3z" fill="#f29a2e"/><path d="M308 190.5H334Q339 190.5 342 187.5T351 185" stroke="#f29a2e" stroke-width="4.6" fill="none"/><rect x="347.5" y="179.8" width="12" height="11.8" rx="1" fill="#9ca0a8" stroke="#6a6e76" stroke-width="0.6"/><path d="M355,163.5 L443.5,152.3 L463.5,155.6 M356,166.3 L441,156 L462,158.5 M357,169 L439,159.5 M358,171 L420,163.5" stroke="#4aa83a" stroke-width="0.9" stroke-dasharray="0.9 0.9" fill="none" stroke-opacity="0.85"/><path d="M404.3,149.5 L405.5,160" stroke="#2244d8" stroke-width="1.6"/><path d="M406,159.5 L412,158" stroke="#e07a20" stroke-width="1.5"/></svg>
<svg width="200" height="14" style="left:0;top:531px"><path d="M5 3h3.5l1.5 1.5v6.5h-5z" fill="#e8eef6"/><path d="M61.5 7h2.5l-1.25 1.5z" fill="#9fb6d8"/><path d="M70 10v-3l3.5-3 3.5 3v3z" fill="#dfe7f2"/><rect x="72" y="8" width="2" height="2" fill="#1c4b8f"/><path d="M105.5 7h2.5l-1.25 1.5z" fill="#9fb6d8"/><rect x="113.5" y="3" width="5.5" height="8" fill="#dfe7f2"/><rect x="114.7" y="4.5" width="3" height="1" fill="#1c4b8f"/><rect x="114.7" y="7" width="3" height="1" fill="#1c4b8f"/><path d="M148.5 7h2.5l-1.25 1.5z" fill="#9fb6d8"/><rect x="152.5" y="1.5" width="27.5" height="11" fill="#a9c1e3"/><path d="M155 9l3-4h4l-1 4z" fill="none" stroke="#3a5a8a" stroke-width="0.8"/><path d="M174 7h2.5l-1.25 1.5z" fill="#5a78a8"/></svg>
<div class="a" style="left:12.50px;top:535.28px;font-size:7.2px;line-height:8.04px;color:#ffffff;transform:scaleX(0.900);">Project Number</div>
<div class="a" style="left:79.00px;top:535.28px;font-size:7.2px;line-height:8.04px;color:#ffffff;transform:scaleX(0.921);">Default</div>
<div class="a" style="left:122.50px;top:535.28px;font-size:7.2px;line-height:8.04px;color:#ffffff;transform:scaleX(0.926);">Edificio</div>
<div class="a" style="left:164.00px;top:535.28px;font-size:7.2px;line-height:8.04px;color:#1c3c70;transform:scaleX(0.962);">N</div>
<div class="a" style="left:183.50px;top:535.28px;font-size:7.2px;line-height:8.04px;color:#ffffff;transform:scaleX(0.832);">&gt;</div>
<div class="a" style="left:947.00px;top:535.46px;font-size:7px;line-height:7.82px;color:#ffffff;transform:scaleX(0.943);">8 m</div>
<div class="a" style="left:974.50px;top:535.46px;font-size:7px;line-height:7.82px;color:#ffffff;transform:scaleX(0.865);">0.01 s</div>
<div class="a" style="left:1004.50px;top:535.46px;font-size:7px;line-height:7.82px;color:#ffffff;transform:scaleX(0.719);">0.7</div>
<svg width="8" height="8" style="left:1013.5px;top:535px"><path d="M3 0.8l.8 1.9 2 .1-1.5 1.3.5 2-1.8-1.1-1.8 1.1.5-2L.2 2.8l2-.1z" fill="#e8eef8"/></svg>
<div class="a" style="left:0px;top:530px;width:646px;height:1px;background:#94acd2;"></div>
<div class="a" style="left:607.00px;top:522.81px;font-size:7.5px;line-height:8.38px;color:#a8a8a8;transform:scaleX(0.973);font-family:'Liberation Serif',serif;">BIM Vision</div>
<svg width="60" height="60" style="left:745px;top:245px"><circle cx="23.1" cy="21.5" r="9.9" fill="#f4f5fc" stroke="#5a6ee2" stroke-width="3.2"/><path d="M16.5 9L17 24.5 20.2 21.6 23.2 27.2 25.6 26 22.6 20.6 27.4 20.2z" fill="#fff" stroke="#2a2a2a" stroke-width="0.9" stroke-linejoin="round"/></svg>
<svg width="44" height="52" style="left:762px;top:282px"><path d="M21 4C11.5 4 5.5 12 5.5 21V30C5.5 39 12 44 21 44S37 39 37 30V21C37 12 31 4 21 4z" fill="#ececec" stroke="#333" stroke-width="1.9"/><path d="M20.5 5C12 5.5 6.5 12.5 6.5 21V24H20.5z" fill="#7b8df0"/><path d="M6 24H36.5" stroke="#333" stroke-width="1.4"/><path d="M21 4.5V24" stroke="#333" stroke-width="1.1"/><rect x="18.3" y="7.6" width="5.6" height="14.6" rx="2.8" fill="#fafafa" stroke="#333" stroke-width="1.3"/></svg>
</body></html>
